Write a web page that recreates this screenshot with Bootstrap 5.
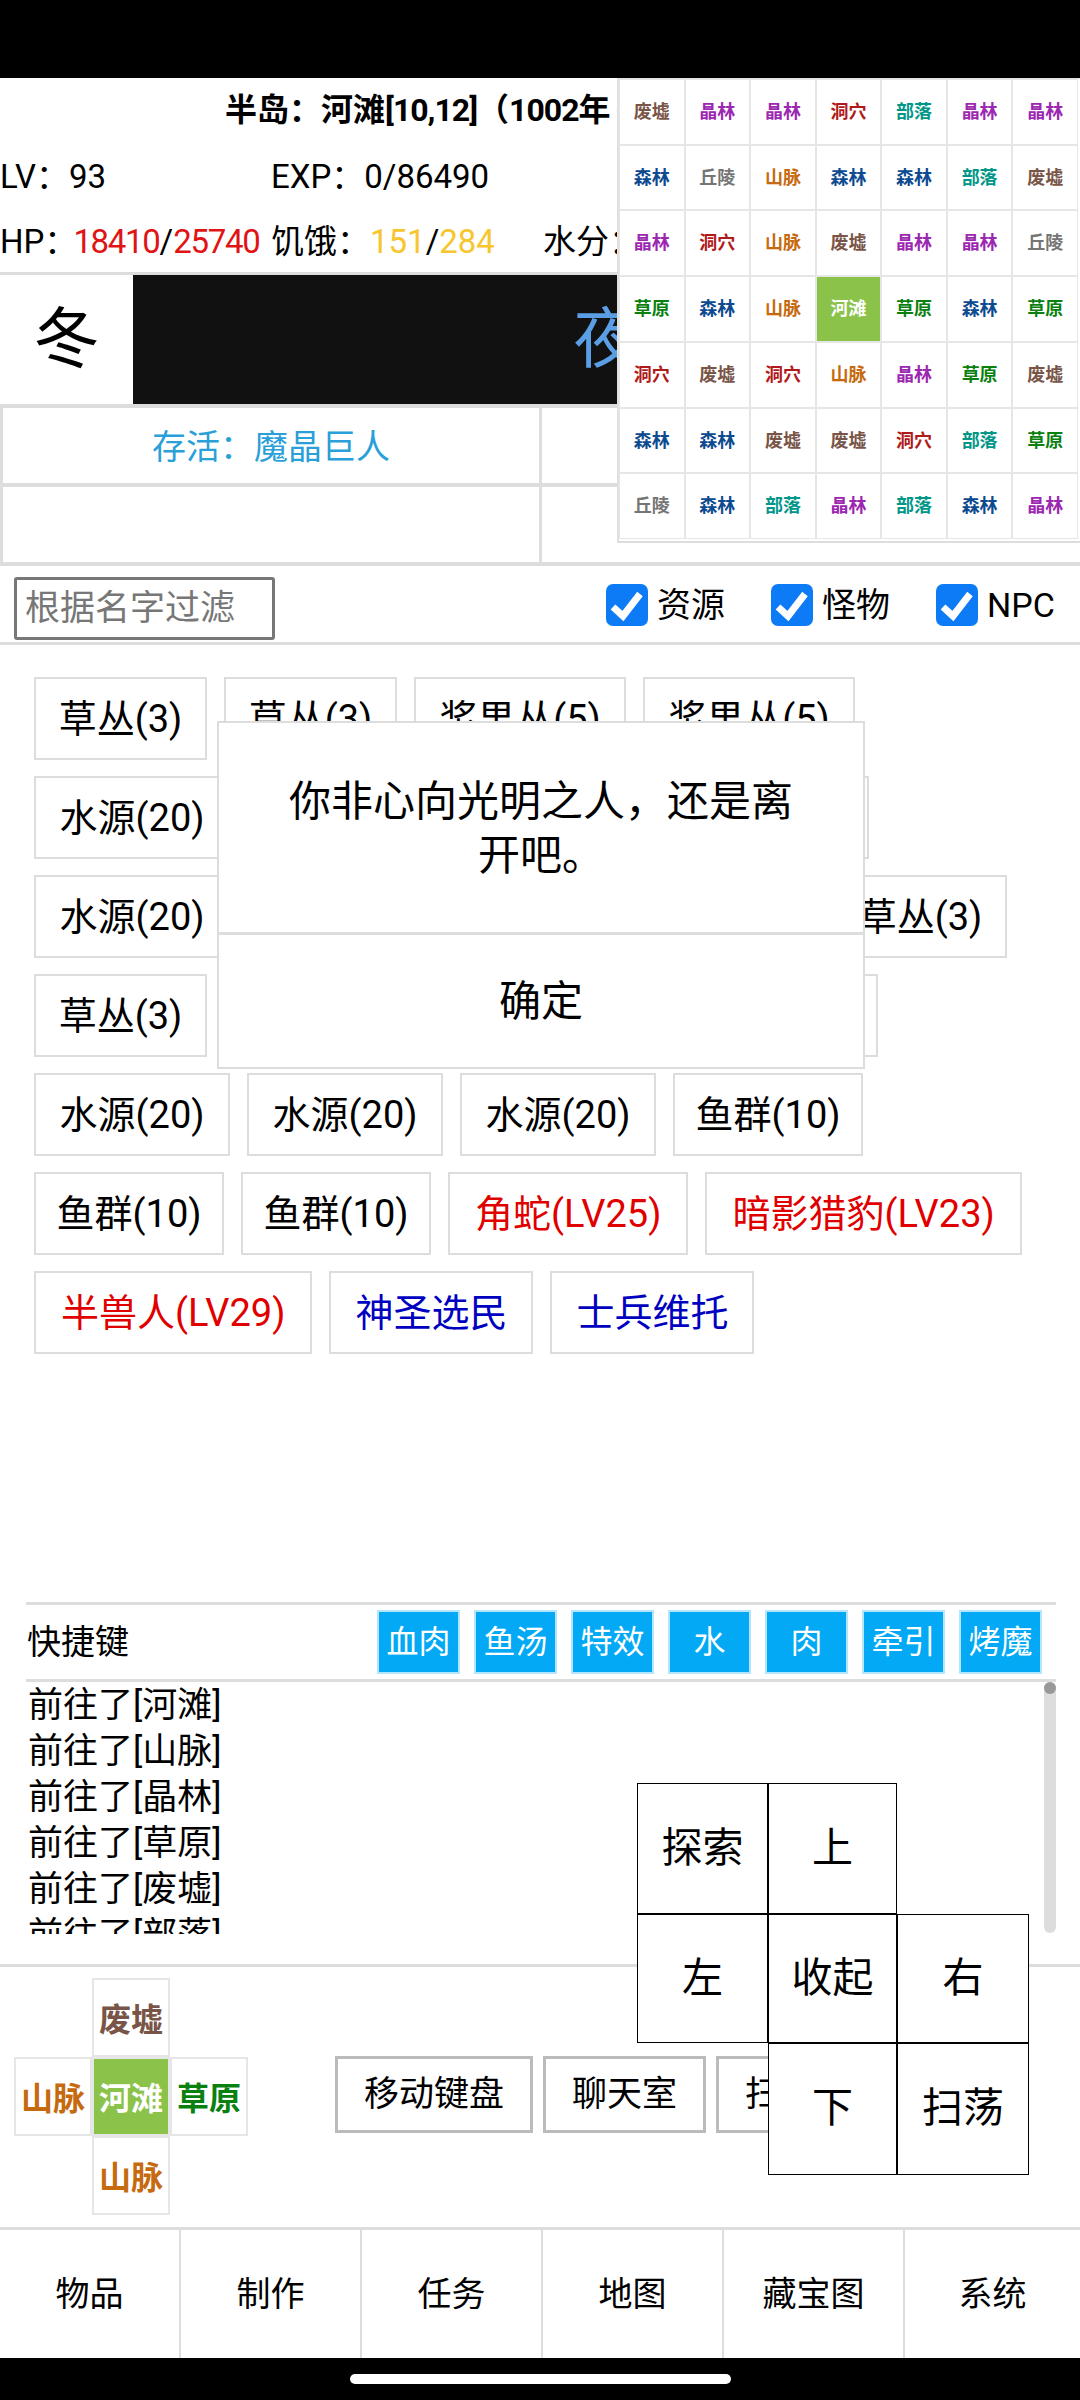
<!DOCTYPE html>
<html lang="zh-CN">
<head>
    <meta charset="UTF-8">
    <meta name="viewport" content="width=device-width, initial-scale=1.0">
    <title>半岛</title>
    <link href="https://cdn.jsdelivr.net/npm/bootstrap@5.3.0/dist/css/bootstrap.min.css" rel="stylesheet">
    <style>
        html, body { margin: 0; background: #fff; }
        body { width: 1080px; height: 2400px; position: relative; overflow: hidden; color: #000;
            font-family: Roboto, "Noto Sans CJK SC", sans-serif; font-size: 33px; line-height: 1.2; }
        .blackbar { background: #000; }
        .top-bar { height: 78px; }
        .info-box { height: 197px; border-bottom: 3px solid #ddd; }
        .title-line { height: 65px; font-size: 32px; font-weight: 700; white-space: nowrap; padding-left: 225px; }
        .title-nums { letter-spacing: -1px; }
        .title-rest { margin-left: 5px; }
        .stat-line { height: 65px; padding-top: 2px; white-space: nowrap; }
        .stat-a { width: 271px; }
        .stat-b { width: 272px; }
        .stat-key { margin-right: -4px; }
        .hp-num { color: #e01414; letter-spacing: -1.3px; }
        .food-num { color: #f7c52d; }
        .season-box { height: 129px; border-bottom: 4px solid #ddd; box-sizing: content-box; }
        .season-name { width: 133px; font-size: 66px; }
        .time-box { background: #111; color: #5a9fe6; font-size: 66px; }
        .buff-row { height: 79px; border-bottom: 4px solid #ddd; border-left: 3px solid #ddd; }
        .buff-cell { width: 539px; padding-top: 3px; border-right: 3px solid #ddd; color: #2a9fd8; font-size: 34px; }
        .filter-row { height: 79px; border-bottom: 3px solid #ddd; padding: 11px 25px 0 14px; }
        .name-filter { width: 261px; height: 63px; border: 3px solid #777; border-radius: 3px; padding: 0 8px; font-size: 35px; }
        .name-filter::placeholder { color: #777; opacity: 1; }
        .kind-check { width: 165px; height: 56px; gap: 9px; font-size: 34px; }
        .kind-check:last-child { width: 119px; }
        .kind-check .form-check-input { width: 42px; height: 42px; margin: 0; flex: none; border: 0; border-radius: 7px; background-color: #0d7bf5; background-size: 100%;
            background-image: url("data:image/svg+xml,%3csvg xmlns='http://www.w3.org/2000/svg' viewBox='0 0 42 42'%3e%3cpath fill='none' stroke='%23fff' stroke-width='7' d='M7 23l10 9 17-22'/%3e%3c/svg%3e"); }
        .thing-list { height: 957px; padding: 32px 20px 0 34px; column-gap: 17px; row-gap: 8px; align-content: flex-start; }
        .thing-btn { height: 83px; padding: 0 24px; font-size: 38px; border: 2px solid #ddd; border-radius: 0; color: #000; background: #fff; line-height: 1; white-space: nowrap; }
        .thing-btn:hover { border-color: #ddd; }
        .w-grass { width: 173px; padding: 0; }
        .w-water { width: 196px; padding: 0; }
        .w-berry { width: 212px; padding: 0; }
        .w-fish { width: 190px; padding: 0; }
        .is-mob { color: #e00000; padding: 0 25px; }
        .is-npc { color: #0000c0; }
        .quick-box { margin: 0 24px 0 26px; border-top: 3px solid #ddd; border-bottom: 3px solid #ddd; height: 80px; padding-right: 14px; }
        .quick-label { padding-left: 1px; font-size: 34px; }
        .quick-row { gap: 14px; }
        .quick-btn { width: 83px; height: 64px; padding: 0; border: 2px solid #b3e5fc; border-radius: 0; background: #03a9f4; color: #fff; font-size: 32px; }
        .log-box { height: 252px; margin: 0 24px 0 26px; position: relative; overflow: hidden; padding: 1px 0 0 2px; font-size: 35px; line-height: 46px; }
        .log-track { position: absolute; top: 0; right: 0; width: 12px; height: 251px; border-radius: 6px; background: #ddd; }
        .log-thumb { height: 12px; border-radius: 6px; background: #999; }
        .move-box { margin-top: 30px; height: 263px; border-top: 3px solid #ddd; position: relative; }
        .mini-map { position: absolute; left: 14px; top: 11px; display: grid; grid-template-columns: repeat(3, 78px); grid-template-rows: repeat(3, 79px); }
        .mini-tile { padding-top: 5px; border: 2px solid #e6e6e6; font-size: 32px; font-weight: 700; }
        .tool-btns { position: absolute; left: 335px; top: 89px; gap: 10px; white-space: nowrap; }
        .tool-btn { height: 77px; padding: 0 26px; font-size: 35px; border: 3px solid #bbb; border-radius: 0; background: #fff; color: #000; line-height: 1; }
        .bottom-nav { height: 131px; border-top: 3px solid #ddd; }
        .nav-cell { width: 181px; border-right: 2px solid #ddd; font-size: 34px; }
        .nav-cell:last-child { border-right: 0; width: auto; flex: 1; }
        .home-bar { height: 42px; }
        .home-pill { width: 381px; height: 10px; border-radius: 5px; background: #fff; }

        .world-map { position: absolute; left: 617px; top: 78px; width: 463px; height: 465px; background: #fff; border-left: 2px solid #e0e0e0; border-top: 1px solid #e0e0e0; border-bottom: 2px solid #ddd; padding: 0 2px 2px 0;
            display: grid; grid-template-columns: repeat(7, 1fr); grid-template-rows: repeat(7, 1fr); }
        .map-tile { border: 1px solid #e6e6e6; font-size: 18px; font-weight: 700; }
        .t-ruin { color: #795548; }
        .t-crystal { color: #9c27b0; }
        .t-cave { color: #b01a1a; }
        .t-tribe { color: #009688; }
        .t-forest { color: #0d4a8f; }
        .t-hill { color: #757575; }
        .t-mount { color: #c66a10; }
        .t-grass { color: #0a800f; }
        .t-here { color: #fff; background: #8bc34a; }

        .msg-box { position: absolute; left: 217px; top: 721px; width: 648px; height: 348px; background: #fff; border: 2px solid #ddd; font-size: 42px; }
        .msg-text { height: 212px; padding: 52px 60px 0; border-bottom: 3px solid #ddd; line-height: 54px; }
        .msg-ok { height: 134px; }

        .pad-box { position: absolute; left: 637px; top: 1783px; width: 392px; height: 392px; display: grid; grid-template-columns: 131px 129px 132px; grid-template-rows: 131px 129px 132px; }
        .pad-key { border: 1px solid #000; background: #fff; font-size: 41px; outline: 1px solid #000; outline-offset: -1px; }
    </style>
</head>
<body>
    <div class="blackbar top-bar"></div>

    <div class="info-box">
        <div class="title-line d-flex align-items-center"><span>半岛：河滩<span class="title-nums">[10,12]</span>（<span class="title-nums">1002</span>年<span class="title-rest">冬）</span></span></div>
        <div class="stat-line d-flex align-items-center">
            <div class="stat-a">LV：93</div>
            <div>EXP：0/86490</div>
        </div>
        <div class="stat-line d-flex align-items-center">
            <div class="stat-a"><span class="stat-key d-inline-block">HP：</span><span class="hp-num">18410</span>/<span class="hp-num">25740</span></div>
            <div class="stat-b">饥饿：<span class="food-num">151</span>/<span class="food-num">284</span></div>
            <div>水分：100/100</div>
        </div>
    </div>

    <div class="season-box d-flex">
        <div class="season-name d-flex align-items-center justify-content-center">冬</div>
        <div class="time-box flex-grow-1 d-flex align-items-center justify-content-center">夜</div>
    </div>

    <div class="buff-row d-flex">
        <div class="buff-cell d-flex align-items-center justify-content-center">存活：魔晶巨人</div>
    </div>
    <div class="buff-row d-flex">
        <div class="buff-cell"></div>
    </div>

    <div class="filter-row d-flex">
        <input class="name-filter" type="text" placeholder="根据名字过滤">
        <div class="d-flex ms-auto">
            <label class="kind-check d-flex align-items-center"><input class="form-check-input" type="checkbox" checked>资源</label>
            <label class="kind-check d-flex align-items-center"><input class="form-check-input" type="checkbox" checked>怪物</label>
            <label class="kind-check d-flex align-items-center"><input class="form-check-input" type="checkbox" checked>NPC</label>
        </div>
    </div>

    <div class="thing-list d-flex flex-wrap">
        <button class="btn thing-btn w-grass">草丛(3)</button>
        <button class="btn thing-btn w-grass">草丛(3)</button>
        <button class="btn thing-btn w-berry">浆果丛(5)</button>
        <button class="btn thing-btn w-berry">浆果丛(5)</button>
        <div class="w-100"></div>
        <button class="btn thing-btn w-water">水源(20)</button>
        <button class="btn thing-btn w-water">水源(20)</button>
        <button class="btn thing-btn w-water">水源(20)</button>
        <button class="btn thing-btn w-water">水源(20)</button>
        <div class="w-100"></div>
        <button class="btn thing-btn w-water">水源(20)</button>
        <button class="btn thing-btn w-grass">草丛(3)</button>
        <button class="btn thing-btn w-grass">草丛(3)</button>
        <button class="btn thing-btn w-fish">鱼群(10)</button>
        <button class="btn thing-btn w-grass">草丛(3)</button>
        <div class="w-100"></div>
        <button class="btn thing-btn w-grass">草丛(3)</button>
        <button class="btn thing-btn w-berry">浆果丛(5)</button>
        <button class="btn thing-btn w-berry">浆果丛(5)</button>
        <button class="btn thing-btn w-water">水源(20)</button>
        <div class="w-100"></div>
        <button class="btn thing-btn w-water">水源(20)</button>
        <button class="btn thing-btn w-water">水源(20)</button>
        <button class="btn thing-btn w-water">水源(20)</button>
        <button class="btn thing-btn w-fish">鱼群(10)</button>
        <div class="w-100"></div>
        <button class="btn thing-btn w-fish">鱼群(10)</button>
        <button class="btn thing-btn w-fish">鱼群(10)</button>
        <button class="btn thing-btn is-mob">角蛇(LV25)</button>
        <button class="btn thing-btn is-mob">暗影猎豹(LV23)</button>
        <div class="w-100"></div>
        <button class="btn thing-btn is-mob">半兽人(LV29)</button>
        <button class="btn thing-btn is-npc">神圣选民</button>
        <button class="btn thing-btn is-npc">士兵维托</button>
    </div>

    <div class="quick-box d-flex align-items-center justify-content-between">
        <div class="quick-label">快捷键</div>
        <div class="quick-row d-flex">
            <button class="btn quick-btn">血肉</button>
            <button class="btn quick-btn">鱼汤</button>
            <button class="btn quick-btn">特效</button>
            <button class="btn quick-btn">水</button>
            <button class="btn quick-btn">肉</button>
            <button class="btn quick-btn">牵引</button>
            <button class="btn quick-btn">烤魔</button>
        </div>
    </div>
    <div class="log-box">
        <div>前往了[河滩]</div>
        <div>前往了[山脉]</div>
        <div>前往了[晶林]</div>
        <div>前往了[草原]</div>
        <div>前往了[废墟]</div>
        <div>前往了[部落]</div>
        <div class="log-track"><div class="log-thumb"></div></div>
    </div>

    <div class="move-box">
        <div class="mini-map">
            <div></div>
            <div class="mini-tile t-ruin d-flex align-items-center justify-content-center">废墟</div>
            <div></div>
            <div class="mini-tile t-mount d-flex align-items-center justify-content-center">山脉</div>
            <div class="mini-tile t-here d-flex align-items-center justify-content-center">河滩</div>
            <div class="mini-tile t-grass d-flex align-items-center justify-content-center">草原</div>
            <div></div>
            <div class="mini-tile t-mount d-flex align-items-center justify-content-center">山脉</div>
            <div></div>
        </div>
        <div class="tool-btns d-flex">
            <button class="btn tool-btn">移动键盘</button>
            <button class="btn tool-btn">聊天室</button>
            <button class="btn tool-btn">扫荡设置</button>
        </div>
    </div>

    <div class="bottom-nav row g-0 flex-nowrap">
        <div class="nav-cell d-flex align-items-center justify-content-center">物品</div>
        <div class="nav-cell d-flex align-items-center justify-content-center">制作</div>
        <div class="nav-cell d-flex align-items-center justify-content-center">任务</div>
        <div class="nav-cell d-flex align-items-center justify-content-center">地图</div>
        <div class="nav-cell d-flex align-items-center justify-content-center">藏宝图</div>
        <div class="nav-cell d-flex align-items-center justify-content-center">系统</div>
    </div>
    <div class="blackbar home-bar d-flex justify-content-center align-items-center">
        <div class="home-pill"></div>
    </div>

    <!-- 大地图，盖在状态栏右边 -->
    <div class="world-map text-center" id="worldMap"></div>

    <div class="msg-box text-center">
        <div class="msg-text">你非心向光明之人，还是离开吧。</div>
        <div class="msg-ok d-flex align-items-center justify-content-center">确定</div>
    </div>

    <div class="pad-box">
        <div class="pad-key d-flex align-items-center justify-content-center">探索</div>
        <div class="pad-key d-flex align-items-center justify-content-center">上</div>
        <div></div>
        <div class="pad-key d-flex align-items-center justify-content-center">左</div>
        <div class="pad-key d-flex align-items-center justify-content-center">收起</div>
        <div class="pad-key d-flex align-items-center justify-content-center">右</div>
        <div></div>
        <div class="pad-key d-flex align-items-center justify-content-center">下</div>
        <div class="pad-key d-flex align-items-center justify-content-center">扫荡</div>
    </div>

    <script>
        const tiles = {废墟: "t-ruin", 晶林: "t-crystal", 洞穴: "t-cave", 部落: "t-tribe", 森林: "t-forest", 丘陵: "t-hill", 山脉: "t-mount", 草原: "t-grass", 河滩: "t-here"};
        const rows = [
            "废墟 晶林 晶林 洞穴 部落 晶林 晶林",
            "森林 丘陵 山脉 森林 森林 部落 废墟",
            "晶林 洞穴 山脉 废墟 晶林 晶林 丘陵",
            "草原 森林 山脉 河滩 草原 森林 草原",
            "洞穴 废墟 洞穴 山脉 晶林 草原 废墟",
            "森林 森林 废墟 废墟 洞穴 部落 草原",
            "丘陵 森林 部落 晶林 部落 森林 晶林"
        ];
        let worldMap = document.getElementById("worldMap");
        rows.forEach(row => {
            row.split(" ").forEach(name => {
                let tile = document.createElement("div");
                tile.className = "map-tile d-flex align-items-center justify-content-center " + tiles[name];
                tile.textContent = name;
                worldMap.appendChild(tile);
            });
        });
    </script>
    <script src="https://cdn.jsdelivr.net/npm/bootstrap@5.3.0/dist/js/bootstrap.bundle.min.js"></script>
</body>
</html>
